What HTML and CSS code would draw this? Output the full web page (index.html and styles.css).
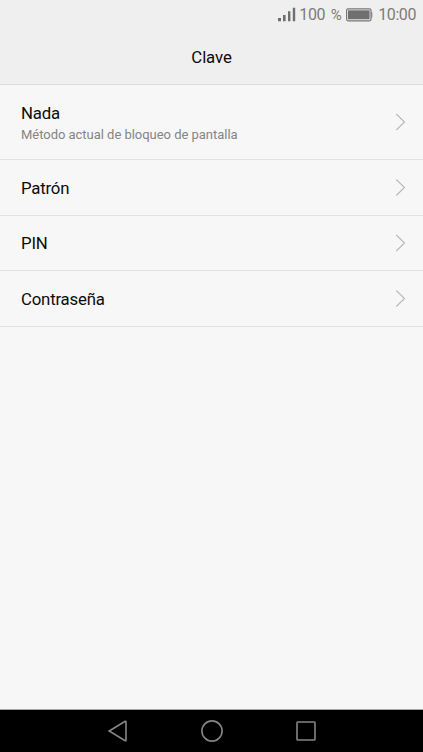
FILE: index.html
```html
<!DOCTYPE html>
<html lang="es">
<head>
<meta charset="utf-8">
<title>Clave</title>
<link rel="stylesheet" href="styles.css">
</head>
<body>
<div class="phone">
  <header class="header">
    <div class="status">
      <svg class="signal" width="18" height="16" viewBox="0 0 18 16"><path d="M0 11h3v3.2H0zM5 7.9h2.6v6.3H5zM10 4.3h2.4v9.9H10zM14.8.7h2.4v13.5h-2.4z" fill="#6f6f6f"/></svg>
      <span class="percent">100 <span class="sign">%</span></span>
      <svg class="battery" width="28" height="14" viewBox="0 0 28 14"><rect x=".6" y=".8" width="24.4" height="12" rx="1.5" fill="none" stroke="#777" stroke-width="1.2"/><rect x="2" y="2.3" width="21.6" height="9" fill="#6f6f6f"/><path d="M25.3 4.2h1v5.2h-1z" fill="#777"/></svg>
      <span class="clock">10:00</span>
    </div>
    <h1 class="title">Clave</h1>
  </header>
  <main class="list">
    <div class="row row-tall">
      <div class="text"><div class="label">Nada</div><div class="note">Método actual de bloqueo de pantalla</div></div>
      <svg class="chevron" width="12" height="18" viewBox="0 0 12 18"><path d="M1.3 1 9.5 9 1.3 17"/></svg>
    </div>
    <div class="row"><div class="text label">Patrón</div><svg class="chevron" width="12" height="18" viewBox="0 0 12 18"><path d="M1.3 .5 9.5 8.5 1.3 16.5"/></svg></div>
    <div class="row row-short"><div class="text label">PIN</div><svg class="chevron" width="12" height="18" viewBox="0 0 12 18"><path d="M1.3 1 9.5 9 1.3 17"/></svg></div>
    <div class="row"><div class="text label">Contraseña</div><svg class="chevron" width="12" height="18" viewBox="0 0 12 18"><path d="M1.3 .5 9.5 8.5 1.3 16.5"/></svg></div>
  </main>
  <nav class="nav">
    <svg width="24" height="24" viewBox="0 0 24 24"><path d="M3.2 12 18.8 2.5Q20 1.8 20 3V21Q20 22.2 18.8 21.5Z"/></svg>
    <svg width="24" height="24" viewBox="0 0 24 24"><circle cx="12" cy="12" r="10.1"/></svg>
    <svg width="24" height="24" viewBox="0 0 24 24"><rect x="3" y="3" width="18" height="18" rx=".8"/></svg>
  </nav>
</div>
</body>
</html>
```
FILE: styles.css
```css
* { box-sizing: border-box; }
body { margin: 0; font-family: Roboto, sans-serif; color: #0c0c0c; }
.phone { display: flex; flex-direction: column; height: 752px; background: #f7f7f7; overflow: hidden; }
.header { height: 85px; background: #efefef; border-bottom: 1px solid #dcdcdc; }
.status { display: flex; align-items: center; justify-content: flex-end; height: 29px; padding-right: 7.5px; font-size: 16px; line-height: 31px; color: #7c7c7c; white-space: nowrap; }
.signal { margin-right: 3.5px; }
.percent { width: 47px; letter-spacing: -.4px; }
.sign { font-size: 15px; margin-left: 2px; }
.battery { width: 28px; margin-right: 4px; }
.clock { letter-spacing: -.45px; margin-right: -.45px; }
.title { margin: 0; font-size: 16.8px; font-weight: 400; line-height: 56px; text-align: center; letter-spacing: -.12px; }
.list { flex: 1; }
.row { display: flex; align-items: center; justify-content: space-between; height: 56px; padding: 0 16px 0 21px; border-bottom: 1px solid #e3e3e3; }
.row-tall { height: 75px; }
.row-short { height: 55px; }
.row-tall .text { padding-top: 4px; }
.row-tall .label { line-height: 21px; }
.label { font-size: 16.8px; line-height: 22px; letter-spacing: -.2px; }
.note { font-size: 13px; line-height: 22px; color: #858585; letter-spacing: -.03px; }
.chevron path { fill: none; stroke: #b8b8b8; stroke-width: 1.1; }
.nav { display: flex; align-items: center; justify-content: center; gap: 70px; height: 43px; background: #000; border-top: 1px solid #a5a8a7; }
.nav svg { fill: none; stroke: #858585; stroke-width: 1.6; }
```
